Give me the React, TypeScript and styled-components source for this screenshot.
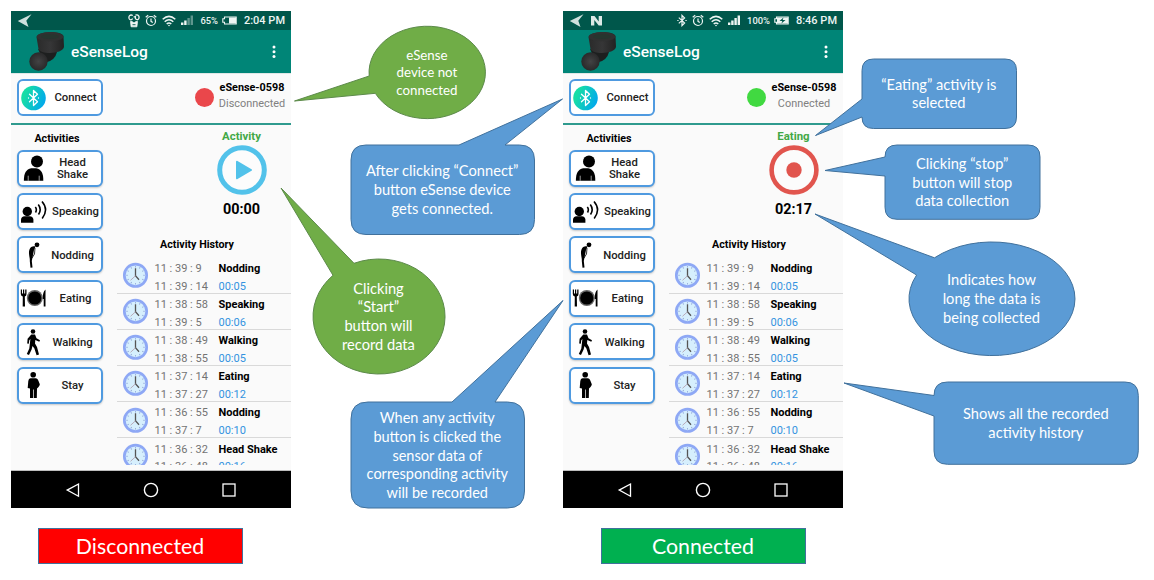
import React from "react";
import styled, { createGlobalStyle } from "styled-components";

const GlobalStyle = createGlobalStyle`
  * { box-sizing: border-box; }
  body { margin: 0; background: #fff; }
`;

const Board = styled.main`
  position: relative;
  display: flex;
  gap: 272px;
  width: 1154px;
  height: 580px;
  padding: 11px 0 0 11px;
  overflow: hidden;
  font-family: Roboto, "Liberation Sans", sans-serif;
`;

const Column = styled.section`
  display: flex;
  flex-direction: column;
  width: 280px;
`;

const Phone = styled.div`
  display: flex;
  flex-direction: column;
  width: 280px;
  height: 497px;
  background: #fafafa;
`;

const StatusBar = styled.div`
  display: flex;
  align-items: center;
  height: 19px;
  padding: 0 6px;
  background: #00574b;
  color: #eef5f3;
`;

const StatusLeft = styled.div`
  display: flex;
  flex: 1;
  gap: 6px;
`;

const StatusIcons = styled.div`
  display: flex;
  align-items: center;
  gap: 4.8px;
`;

const StatusText = styled.span<{ $size: number; $width: number }>`
  width: ${(p) => p.$width}px;
  text-align: right;
  font-size: ${(p) => p.$size}px;
  font-weight: 500;
  white-space: nowrap;
`;

const BatterySlot = styled.span`
  display: flex;
  margin-left: 4px;
`;

const AppBar = styled.div`
  display: flex;
  align-items: center;
  height: 43px;
  padding: 0 14px 0 14px;
  background: #008577;
`;

const AppTitle = styled.h1`
  flex: 1;
  margin: 1px 0 0 3px;
  color: #fff;
  font-size: 15.5px;
  font-weight: 500;
`;

const Header = styled.div`
  display: flex;
  align-items: center;
  height: 52px;
  padding: 0 6px 2px 6px;
  border-top: 1px solid #dfe7e6;
  border-bottom: 2px solid #2f9a8e;
`;

const ActionButton = styled.button<{ $connect?: boolean }>`
  display: flex;
  align-items: center;
  flex: none;
  width: 86px;
  height: 37px;
  padding: 0;
  border: 2px solid #4f9ae0;
  border-radius: 6px;
  background: #fff;
  box-shadow: ${(p) => (p.$connect ? "none" : "0 1px 2px rgba(0, 0, 0, 0.2)")};
  color: #222;
  font-family: inherit;
`;

const ButtonLabel = styled.span`
  flex: 1;
  padding-top: 2.5px;
  text-align: center;
  font-size: 11.3px;
  font-weight: 500;
  line-height: 12.8px;
`;

const Device = styled.div`
  display: flex;
  align-items: center;
  gap: 5px;
  margin-left: auto;
`;

const StatusDot = styled.span<{ $on: boolean }>`
  width: 19px;
  height: 19px;
  border-radius: 50%;
  background: ${(p) => (p.$on ? "#41d941" : "#ea474b")};
`;

const DeviceText = styled.div`
  display: flex;
  flex-direction: column;
  align-items: center;
  width: 66px;
  margin-top: -3px;
  color: #808080;
  font-size: 10.9px;
  line-height: 16.5px;
  white-space: nowrap;
`;

const DeviceName = styled.strong`
  color: #000;
  font-size: 10.8px;
  font-weight: 700;
`;

const Body = styled.div`
  display: flex;
  height: 339.5px;
  overflow: hidden;
`;

const Activities = styled.div`
  display: flex;
  flex-direction: column;
  gap: 6.4px;
  width: 106px;
  padding-left: 6px;
`;

const ActivitiesTitle = styled.h2`
  flex: none;
  width: 80px;
  height: 24.3px;
  margin: 0 0 -6px;
  padding-top: 7px;
  color: #000;
  text-align: center;
  font-size: 10.7px;
  font-weight: 700;
  line-height: 13px;
`;

const Session = styled.div`
  display: flex;
  flex-direction: column;
  flex: 1;
`;

const Recorder = styled.div`
  display: flex;
  flex-direction: column;
  flex: none;
  align-items: center;
  align-self: flex-end;
  width: 99px;
  height: 109px;
  padding-top: 3px;
`;

const Current = styled.span`
  margin-bottom: 1px;
  color: #42a846;
  font-size: 11.4px;
  font-weight: 700;
  line-height: 16px;
`;

const Timer = styled.span`
  margin-top: 6px;
  color: #000;
  font-size: 14.4px;
  font-weight: 700;
  line-height: 18px;
`;

const HistoryTitle = styled.h2`
  flex: none;
  width: 160px;
  height: 23.5px;
  margin: 0;
  color: #000;
  text-align: center;
  font-size: 10.7px;
  font-weight: 700;
  line-height: 22px;
`;

const HistoryRow = styled.div`
  display: flex;
  align-items: center;
  flex: none;
  height: 36.15px;
  border-bottom: 1px solid #d9d9d9;
  color: #737373;
  font-size: 11px;
  line-height: 17.7px;
  white-space: nowrap;
`;

const Times = styled.div`
  display: flex;
  flex-direction: column;
  width: 64px;
  margin: 5px 0 0 0.5px;
`;

const Entry = styled.div`
  display: flex;
  flex-direction: column;
  margin-top: 5px;
  color: #3493e0;
`;

const EntryName = styled.strong`
  color: #000;
  font-size: 11px;
  font-weight: 700;
`;

const NavBar = styled.div`
  display: flex;
  align-items: center;
  justify-content: center;
  gap: 62px;
  height: 38px;
  margin-top: auto;
  border-top: 1px solid #bdbdbd;
  background: #000;
`;

const Caption = styled.div<{ $on: boolean }>`
  display: flex;
  align-items: center;
  justify-content: center;
  width: 205px;
  height: 36px;
  margin: 20px 0 0 ${(p) => (p.$on ? 38 : 27)}px;
  padding-right: 1px;
  border: 1px solid #41719c;
  background: ${(p) => (p.$on ? "#00b050" : "#ff0000")};
  color: #fff;
  font-family: Lato, sans-serif;
  font-size: 21.3px;
`;

const CalloutBox = styled.div<{ $x: number; $y: number; $w: number; $h: number; $size: number }>`
  position: absolute;
  left: ${(p) => p.$x}px;
  top: ${(p) => p.$y}px;
  display: flex;
  flex-direction: column;
  align-items: center;
  justify-content: center;
  width: ${(p) => p.$w}px;
  height: ${(p) => p.$h}px;
  padding: 1.4px 1px 0 0;
  color: #fff;
  font-family: Lato, sans-serif;
  font-size: ${(p) => p.$size}px;
  line-height: ${(p) => (p.$size < 14 ? 17.6 : 18.7)}px;
  white-space: nowrap;
`;

const CalloutShape = styled.svg`
  position: absolute;
  inset: 0;
  overflow: visible;
`;

const CalloutLine = styled.span`
  position: relative;
`;

type CalloutData = {
  x: number; y: number; w: number; h: number;
  path: string; green?: boolean; lines: string[]; size?: number;
};

/* Rounded box whose tail leaves the top edge */
const topTail = (w: number, h: number, r: number, a: number, b: number, tx: number, ty: number) =>
  `M${r} 0H${a}L${tx} ${ty}L${b} 0H${w - r}Q${w} 0 ${w} ${r}V${h - r}Q${w} ${h} ${w - r} ${h}H${r}Q0 ${h} 0 ${h - r}V${r}Q0 0 ${r} 0Z`;

/* Rounded box whose tail leaves the left edge */
const leftTail = (w: number, h: number, r: number, a: number, b: number, tx: number, ty: number) =>
  `M${r} 0H${w - r}Q${w} 0 ${w} ${r}V${h - r}Q${w} ${h} ${w - r} ${h}H${r}Q0 ${h} 0 ${h - r}V${b}L${tx} ${ty}L0 ${a}V${r}Q0 0 ${r} 0Z`;

const callouts: CalloutData[] = [
  {
    x: 369.2, y: 26, w: 116.5, h: 92.5, green: true, size: 13.3,
    path: "M0.2 50L-74.5 75L6.3 67.3A58.2 46.2 0 1 0 0.2 50Z",
    lines: ["eSense", "device not", "connected"],
  },
  {
    x: 351, y: 145, w: 183.5, h: 89.5,
    path: topTail(183.5, 89.5, 15, 108, 154, 211.5, -46),
    lines: ["After clicking “Connect”", "button eSense device", "gets connected."],
  },
  {
    x: 313, y: 259, w: 132, h: 115, green: true,
    path: "M20 16.3L-32 -71L41 4.3A66 57.5 0 1 1 20 16.3Z",
    lines: ["Clicking", "“Start”", "button will", "record data"],
  },
  {
    x: 351, y: 402.2, w: 173.5, h: 106, size: 14.5,
    path: topTail(173.5, 106, 17, 101, 144, 212, -101.5),
    lines: ["When any activity", "button is clicked the", "sensor data of", "corresponding activity", "will be recorded"],
  },
  {
    x: 862, y: 59, w: 154.5, h: 69.5,
    path: leftTail(154.5, 69.5, 11.5, 40, 58, -46.5, 76.5),
    lines: ["“Eating” activity is", "selected"],
  },
  {
    x: 885.2, y: 145.2, w: 155, h: 74.3,
    path: leftTail(155, 74.3, 12, 12, 31, -60, 25.5),
    lines: ["Clicking “stop”", "button will stop", "data collection"],
  },
  {
    x: 909, y: 242, w: 166, h: 113.5,
    path: "M25.5 15.8L-94 -28L7.6 33A83 56.8 0 1 0 25.5 15.8Z",
    lines: ["Indicates how", "long the data is", "being collected"],
  },
  {
    x: 934.2, y: 382, w: 204.3, h: 82.3,
    path: leftTail(204.3, 82.3, 13.5, 13.5, 34, -90, 1),
    lines: ["Shows all the recorded", "activity history"],
  },
];

const Callout = ({ c }: { c: CalloutData }) => (
  <CalloutBox $x={c.x} $y={c.y} $w={c.w} $h={c.h} $size={c.size ?? 14.65}>
    <CalloutShape width={c.w} height={c.h}>
      <path d={c.path} fill={c.green ? "#70ad47" : "#5b9bd5"} stroke={c.green ? "#5c8a4a" : "#41719c"} strokeWidth="1" />
    </CalloutShape>
    {c.lines.map((l) => (
      <CalloutLine key={l}>{l}</CalloutLine>
    ))}
  </CalloutBox>
);

const SendIcon = () => (
  <svg width="15" height="14" viewBox="0 0 15 14"><path d="M0.8 7L14.5 0.3L9.3 6.8L11.5 13Z" fill="#cfe0dd" /></svg>
);
const NIcon = () => (
  <svg width="13" height="14" viewBox="0 0 13 14"><path d="M1 11.500V2H4.500L8.700 7.500V2H12V11.500H8.700L4.300 6V11.500Z" fill="#dce9e6" /></svg>
);
const FaceIcon = () => (
  <svg width="12" height="14" viewBox="0 0 12 14" fill="none" stroke="#eef5f3">
    <path d="M4.800 1.500C2 0 0.300 2.400 1.200 4.700C2 6.400 3.800 6 4.600 4.500M5.600 2.800H7.200M7.400 1.200C10.500 0.200 11.800 2.600 10.600 4.900C9.800 6.200 8.200 5.900 7.400 4.500V2" strokeWidth="1.300" />
    <path d="M2.500 7.500H4L6 9L8 7.500H9.500L8.900 12.800H3.100Z" fill="#eef5f3" strokeWidth="0.800" />
    <path d="M4.500 10.700H7.500" stroke="#00574b" strokeWidth="0.900" />
  </svg>
);
const BluetoothSmall = () => (
  <svg width="10" height="13" viewBox="0 0 10 13" fill="none" stroke="#eef5f3" strokeWidth="1.2">
    <path d="M1.800 3.600L7.600 9L5 11.600V1.400L7.600 4L1.800 9.400M0.300 6.500H1.600M8.400 6.500H9.700" />
  </svg>
);
const AlarmIcon = () => (
  <svg width="12" height="13" viewBox="0 0 12 13" fill="none" stroke="#eef5f3" strokeWidth="1.200">
    <circle cx="6" cy="7" r="4.500" />
    <path d="M6 4.500V7.300L7.800 8.400M0.700 3.200L3.200 1.200M11.300 3.200L8.800 1.200" />
  </svg>
);
const WifiIcon = () => (
  <svg width="14" height="12" viewBox="0 0 14 12" fill="none" stroke="#eef5f3" strokeWidth="1.500">
    <path d="M0.700 4.200Q7 -1.500 13.300 4.200M2.700 6.700Q7 2.800 11.300 6.700M4.700 9Q7 7 9.300 9" />
    <circle cx="7" cy="10.500" r="0.800" fill="#eef5f3" stroke="none" />
  </svg>
);
const SignalIcon = ({ full }: { full: boolean }) => (
  <svg width="12" height="11" viewBox="0 0 12 11" fill="#eef5f3">
    <rect x="0" y="7.500" width="2.400" height="2.500" />
    <rect x="3.200" y="5.500" width="2.400" height="4.500" />
    <rect x="6.400" y="3" width="2.400" height="7" opacity={full ? 1 : 0.4} />
    <rect x="9.600" y="0.500" width="2.400" height="9.500" opacity={full ? 1 : 0.4} />
  </svg>
);
const BatteryIcon = ({ full }: { full: boolean }) => (
  <svg width="15" height="9" viewBox="0 0 15 9">
    <path d="M2.500 1H14.200V8H2.500V6.200H0.800V2.800H2.500Z" fill="none" stroke="#eef5f3" strokeWidth="1.100" />
    <rect x={full ? 3 : 7} y="1.500" width={full ? 11 : 7} height="6" fill="#eef5f3" />
    {full && <path d="M9.500 1.400L5.500 4.900H8.300L7.400 7.600L11.500 4H8.700Z" fill="#00574b" />}
  </svg>
);

const EarbudImage = () => (
  <svg width="43" height="43" viewBox="0 0 43 43">
    <defs>
      <linearGradient id="shell" x1="0" x2="1">
        <stop offset="0" stopColor="#2a2a2a" /><stop offset="0.500" stopColor="#363637" /><stop offset="1" stopColor="#222" />
      </linearGradient>
      <radialGradient id="tip"><stop offset="0" stopColor="#434344" /><stop offset="1" stopColor="#29292a" /></radialGradient>
    </defs>
    <path d="M13 19L32 22Q30 30 22 32L18 30Z" fill="#1d1f1f" />
    <path d="M11.500 7C13 1 36 0 38.500 6L39 17C38 24 16 25 13.500 19Z" fill="url(#shell)" />
    <ellipse cx="25" cy="6.800" rx="13.300" ry="4.500" fill="#303131" />
    <ellipse cx="25" cy="6.600" rx="9" ry="2.400" fill="#27352f" />
    <path d="M17 22L22 34L18 38Z" fill="#222" />
    <circle cx="13.500" cy="31.500" r="9.200" fill="url(#tip)" />
  </svg>
);
const MenuDots = () => (
  <svg width="6" height="14" viewBox="0 0 6 14" fill="#fff">
    <circle cx="3" cy="2" r="1.500" /><circle cx="3" cy="6.700" r="1.500" /><circle cx="3" cy="11.400" r="1.500" />
  </svg>
);
const BluetoothRound = () => (
  <svg width="31" height="34" viewBox="0 0 31 34">
    <defs><linearGradient id="bt" x1="0" y1="0.300" x2="1" y2="0.700">
      <stop offset="0.150" stopColor="#16dda6" /><stop offset="1" stopColor="#00a6f0" />
    </linearGradient></defs>
    <circle cx="14.500" cy="17" r="12.300" fill="url(#bt)" />
    <path d="M10.500 13.200L18.500 20.800L14.500 24.500V9.500L18.500 13.200L10.500 20.800M9.500 17h.01M19.500 17h.01" fill="none" stroke="#fff" strokeWidth="1.300" strokeLinecap="round" strokeLinejoin="round" />
  </svg>
);

const HeadIcon = () => (
  <svg width="25" height="34" viewBox="0 0 25 34">
    <circle cx="18" cy="10.500" r="6" />
    <path d="M4.900 29.700C4.700 22.500 7.200 18 12.200 17.200H17.200C22.200 18 24.500 22.500 24.300 29.700Z" />
    <path d="M9.200 29.700V24.700M20.200 29.700V24.700" stroke="#fff" strokeWidth="0.600" />
  </svg>
);
const SpeakingIcon = () => (
  <svg width="31" height="34" viewBox="0 0 31 34">
    <circle cx="8.300" cy="16.500" r="4.700" />
    <path d="M2 27.800V24.500Q2.200 21.500 5.700 21.200H10.700Q14.200 21.500 14.400 24.500V27.800Z" />
    <path d="M16.300 12Q18.300 14.500 16.500 17.500M19.300 9.500Q23 14.500 19.500 19.500M23 6.500Q30 14.500 23.200 23.500" fill="none" stroke="#000" strokeWidth="1.600" />
  </svg>
);
const NoddingIcon = () => (
  <svg width="25" height="34" viewBox="0 0 25 34">
    <circle cx="18" cy="6.800" r="2.400" />
    <path d="M16.500 8.500C12.500 7 9.700 10.500 10 15.500C10.200 19 11 20 10.800 23L11.500 29.800L13.500 29.500L12.800 23L14 17L15 12Z" />
    <path d="M16 10L15.500 16L13 20" fill="none" stroke="#000" strokeWidth="0.800" />
  </svg>
);
const EatingIcon = () => (
  <svg width="31" height="34" viewBox="0 0 31 34">
    <circle cx="15.800" cy="17" r="8" fill="#666" />
    <circle cx="15.800" cy="17" r="6.600" />
    <path d="M1.800 8.500H3V12.500H4V8.500H5.200V12.500H6.200V8.500H7.500V13Q7.500 15 5.800 15.500L6 25.500H3.700L3.800 15.500Q1.900 15 1.800 13Z" />
    <path d="M26.500 8.500V25.500H24.700V18H23.800Q23.500 11 26.500 8.500Z" />
  </svg>
);
const WalkingIcon = () => (
  <svg width="25" height="34" viewBox="0 0 25 34">
    <circle cx="14" cy="6.500" r="2.300" />
    <path d="M12.300 9.600H16L17.500 13.200L21 15.200L20.300 16.700L16.300 15L16 18.500L18 22L20 29.500L17.600 30.200L15.400 23.500L13.500 21L12.600 24.500L10 30L7.800 29L10.300 23.500L11.400 14L10.300 15.300L9.800 18.700L8.200 18.500L8.600 13.800Z" />
  </svg>
);
const StayIcon = () => (
  <svg width="25" height="34" viewBox="0 0 25 34">
    <circle cx="14.200" cy="6.800" r="2.800" />
    <path d="M11.500 10.300H17Q18.700 10.500 19.300 12.500L20.800 16.300Q21 17.800 18 20.500L17.800 30H14.700V21.500H14V30H11V20.500L8.700 20L9.300 13Q9.600 10.500 11.500 10.300Z" />
  </svg>
);

const PlayIcon = () => (
  <svg width="50" height="50" viewBox="0 0 50 50">
    <circle cx="25" cy="25" r="22.300" fill="#fcfcfc" stroke="#52c2ea" strokeWidth="5" />
    <path d="M20 16.800L34 25L20 33.200Z" fill="#52c2ea" stroke="#52c2ea" strokeWidth="2" strokeLinejoin="round" />
  </svg>
);
const StopIcon = () => (
  <svg width="50" height="50" viewBox="0 0 50 50">
    <circle cx="25" cy="25" r="22.400" fill="#fcfcfc" stroke="#e1554e" strokeWidth="4.600" />
    <circle cx="25" cy="25" r="7.700" fill="#e1554e" />
  </svg>
);
const ticks = Array.from({ length: 12 }, (_, i) => i * 30);
const ClockIcon = () => (
  <svg width="37" height="26" viewBox="0 0 37 26">
    <circle cx="18.500" cy="13.300" r="11.200" fill="#d6effd" stroke="#8ea8f5" strokeWidth="2.700" />
    {ticks.map((a) => (
      <path key={a} d="M18.500 4.100V5.500" stroke="#8fa3d6" strokeWidth="0.900" transform={`rotate(${a} 18.500 13.300)`} />
    ))}
    <path d="M18.500 6.300V13.800L22 17.800" fill="none" stroke="#555" strokeWidth="1.300" />
    <path d="M18.500 13.800L13.500 18.300" stroke="#b09aa8" strokeWidth="0.800" />
  </svg>
);

const activities: [string, React.FC][] = [
  ["Head Shake", HeadIcon],
  ["Speaking", SpeakingIcon],
  ["Nodding", NoddingIcon],
  ["Eating", EatingIcon],
  ["Walking", WalkingIcon],
  ["Stay", StayIcon],
];

const history = [
  ["11 : 39 : 9", "11 : 39 : 14", "Nodding", "00:05"],
  ["11 : 38 : 58", "11 : 39 : 5", "Speaking", "00:06"],
  ["11 : 38 : 49", "11 : 38 : 55", "Walking", "00:05"],
  ["11 : 37 : 14", "11 : 37 : 27", "Eating", "00:12"],
  ["11 : 36 : 55", "11 : 37 : 7", "Nodding", "00:10"],
  ["11 : 36 : 32", "11 : 36 : 48", "Head Shake", "00:16"],
];

const PhoneScreen = ({ on }: { on: boolean }) => (
  <Phone>
    <StatusBar>
      <StatusLeft><SendIcon />{on && <NIcon />}</StatusLeft>
      <StatusIcons>
        {on ? <BluetoothSmall /> : <FaceIcon />}
        <AlarmIcon />
        <WifiIcon />
        <SignalIcon full={on} />
      </StatusIcons>
      <StatusText $size={9.4} $width={on ? 30.5 : 25.5}>{on ? "100%" : "65%"}</StatusText>
      <BatterySlot><BatteryIcon full={on} /></BatterySlot>
      <StatusText $size={11} $width={48}>{on ? "8:46 PM" : "2:04 PM"}</StatusText>
    </StatusBar>
    <AppBar>
      <EarbudImage />
      <AppTitle>eSenseLog</AppTitle>
      <MenuDots />
    </AppBar>
    <Header>
      <ActionButton $connect>
        <BluetoothRound />
        <ButtonLabel>Connect</ButtonLabel>
      </ActionButton>
      <Device>
        <StatusDot $on={on} />
        <DeviceText>
          <DeviceName>eSense-0598</DeviceName>
          <span>{on ? "Connected" : "Disconnected"}</span>
        </DeviceText>
      </Device>
    </Header>
    <Body>
      <Activities>
        <ActivitiesTitle>Activities</ActivitiesTitle>
        {activities.map(([name, Icon]) => (
          <ActionButton key={name}>
            <Icon />
            <ButtonLabel>{name}</ButtonLabel>
          </ActionButton>
        ))}
      </Activities>
      <Session>
        <Recorder>
          <Current>{on ? "Eating" : "Activity"}</Current>
          {on ? <StopIcon /> : <PlayIcon />}
          <Timer>{on ? "02:17" : "00:00"}</Timer>
        </Recorder>
        <HistoryTitle>Activity History</HistoryTitle>
        {history.map(([start, end, name, length]) => (
          <HistoryRow key={start}>
            <ClockIcon />
            <Times><span>{start}</span><span>{end}</span></Times>
            <Entry><EntryName>{name}</EntryName><span>{length}</span></Entry>
          </HistoryRow>
        ))}
      </Session>
    </Body>
    <NavBar>
      <svg width="16" height="16" viewBox="0 0 16 16"><path d="M13.500 2V14.200L2.200 8.100Z" fill="none" stroke="#fff" strokeWidth="1.300" /></svg>
      <svg width="16" height="16" viewBox="0 0 16 16"><circle cx="8" cy="8" r="6.600" fill="none" stroke="#fff" strokeWidth="1.400" /></svg>
      <svg width="16" height="16" viewBox="0 0 16 16"><rect x="2" y="2" width="12" height="12" fill="none" stroke="#fff" strokeWidth="1.300" /></svg>
    </NavBar>
  </Phone>
);

export default function App() {
  return (
    <>
      <GlobalStyle />
      <Board>
        {[false, true].map((on) => (
          <Column key={String(on)}>
            <PhoneScreen on={on} />
            <Caption $on={on}>{on ? "Connected" : "Disconnected"}</Caption>
          </Column>
        ))}
        {callouts.map((c) => <Callout key={c.lines[0]} c={c} />)}
      </Board>
    </>
  );
}
